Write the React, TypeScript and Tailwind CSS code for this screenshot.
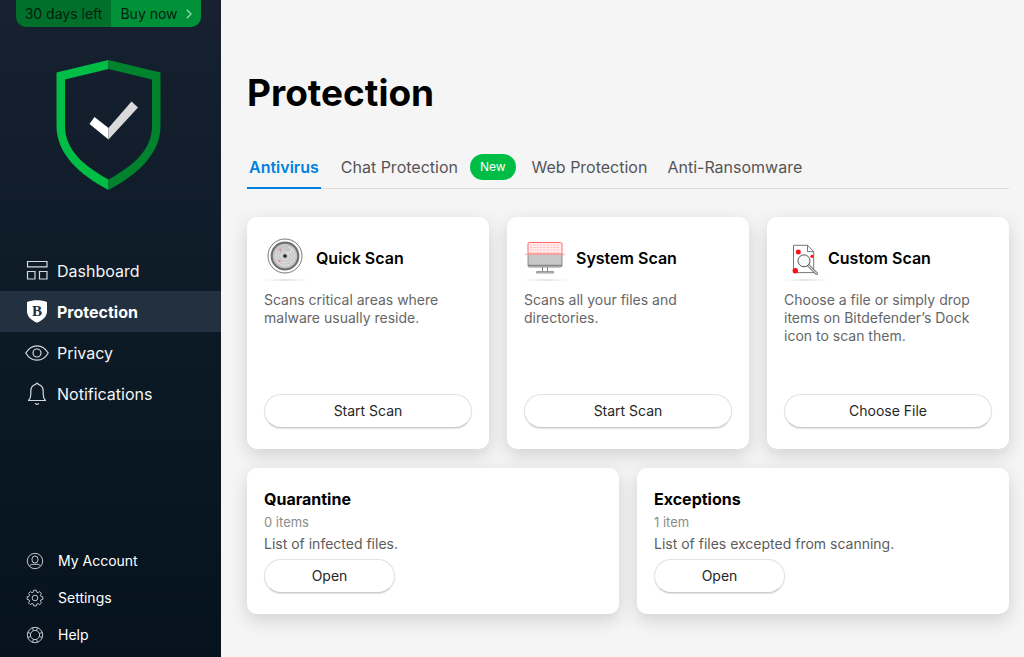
import { ReactNode } from "react";
import clsx from "clsx";

interface NavItem {
  label: string;
  icon: ReactNode;
  active?: boolean;
}

interface ScanCardProps {
  title: string;
  description: string;
  action: string;
  icon: ReactNode;
}

interface ListCardProps {
  title: string;
  count: string;
  description: string;
}

const StatusShield = () => (
  <svg width="106" height="130" viewBox="0 0 106 130" role="img" aria-label="Protected">
    <path d="M52.500 0 L0.500 12.500 V66 C0.500 94 24 115 52.500 130 V119.500 C28 106 9 90 9 66 V19.500 L52.500 9 Z" fill="#00bd45" />
    <path d="M52.500 0 L104.500 12.500 V66 C104.500 94 81 115 52.500 130 V119.500 C77 106 96 90 96 66 V19.500 L52.500 9 Z" fill="#00832c" />
    <path d="M38.500 57 L52.500 68 V79.500 L33.500 64 Z" fill="#fff" />
    <path d="M52.500 68 L75.500 41.500 L82 47.500 L52.500 79.500 Z" fill="#dadada" />
  </svg>
);

const DashboardIcon = () => (
  <svg width="24" height="24" viewBox="0 0 24 24" fill="none" stroke="#d5d9dd" strokeWidth="1.2">
    <path d="M2.500 2.500h19.500v5.300H2.500zM2.500 12.500h7.500v7.500H2.500zM14.500 12.500h7.500v7.500h-7.500z" />
  </svg>
);

const ShieldIcon = () => (
  <svg width="24" height="24" viewBox="0 0 24 24">
    <path d="M12 .3c3.500 0 7 .6 10 1.800v9.200c0 5-4 9-10 11.400C6 20.300 2 16.300 2 11.300V2.100C5 .9 8.500.3 12 .3z" fill="#fff" />
    <text x="12" y="16" textAnchor="middle" fontFamily="Liberation Serif, serif" fontSize="15" fontWeight="bold" fill="#22303f">B</text>
  </svg>
);

const EyeIcon = () => (
  <svg width="24" height="24" viewBox="0 0 24 24" fill="none" stroke="#d5d9dd" strokeWidth="1.2">
    <path d="M.8 12C3.500 7.300 7.300 4.800 12 4.800S20.500 7.300 23.200 12C20.500 16.700 16.700 19.200 12 19.200S3.500 16.700.8 12z" />
    <circle cx="12" cy="12" r="4" />
  </svg>
);

const BellIcon = () => (
  <svg width="24" height="24" viewBox="0 0 24 24" fill="none" stroke="#d5d9dd" strokeWidth="1.2" strokeLinejoin="round">
    <path d="M3.500 18.500c1.700-1.600 2.300-3.600 2.300-6.500V9.500c0-3.700 2-6.600 5-7.200C10.800.8 13.200.8 13.200 2.300c3 .6 5 3.500 5 7.200V12c0 2.900.6 4.900 2.300 6.500z" />
    <path d="M10.200 21.300c.7 1.500 2.900 1.500 3.600 0" />
  </svg>
);

const AccountIcon = () => (
  <svg width="18" height="18" viewBox="0 0 18 18" fill="none" stroke="#bfc5ca" strokeWidth="1">
    <circle cx="9" cy="9" r="7.700" />
    <rect x="6" y="4" width="6" height="7" rx="3" />
    <path d="M3.500 14.300c.6-1.500 1.800-2 3.500-2h4c1.700 0 2.900.5 3.500 2" />
  </svg>
);

const SettingsIcon = () => (
  <svg width="18" height="18" viewBox="0 0 18 18" fill="none" stroke="#bfc5ca" strokeWidth="1" strokeLinejoin="round">
    <path d="M7.700 1.200h2.600l.5 2 1.100.5 1.800-1.100 1.800 1.800-1.100 1.800.5 1.100 1.900.5v2.600l-1.900.5-.5 1.100 1.100 1.800-1.800 1.800-1.800-1.100-1.100.5-.5 1.900H7.700l-.5-1.900-1.100-.5-1.800 1.100-1.800-1.800 1.100-1.800-.5-1.100-1.900-.5V7.800l1.900-.5.5-1.100-1.100-1.800 1.800-1.800 1.800 1.100 1.100-.5z" />
    <circle cx="9" cy="9" r="2.800" />
  </svg>
);

const HelpIcon = () => (
  <svg width="18" height="18" viewBox="0 0 18 18" fill="none" stroke="#bfc5ca" strokeWidth="1">
    <circle cx="9" cy="9" r="7.700" />
    <circle cx="9" cy="9" r="4.600" />
    <path d="M6.500 1.700l1 3M11.500 1.700l-1 3M6.500 16.300l1-3M11.500 16.300l-1-3M1.700 6.500l3 1M1.700 11.500l3-1M16.300 6.500l-3 1M16.300 11.500l-3-1" />
  </svg>
);

const RadarIcon = () => (
  <svg width="42" height="42" viewBox="0 0 42 42" fill="none">
    <circle cx="21" cy="19" r="17" fill="#fff" stroke="#777" strokeWidth="1" />
    <circle cx="21" cy="19" r="13.300" fill="#c6c6c6" stroke="#707070" strokeWidth="2.200" />
    <circle cx="21" cy="19" r="9.500" stroke="#eee" strokeWidth=".8" strokeDasharray="36 12" />
    <circle cx="21" cy="19" r="6.800" stroke="#eee" strokeWidth=".8" strokeDasharray="30 8" />
    <circle cx="21" cy="19" r="4.200" stroke="#eee" strokeWidth=".8" />
    <path d="M21 19L29 12" stroke="#eee" strokeWidth="1" />
    <circle cx="16.500" cy="13" r="1.200" fill="#f58a8a" />
    <circle cx="15.500" cy="24" r="1.200" fill="#f58a8a" />
    <circle cx="21" cy="19" r="1.800" fill="#222" />
  </svg>
);

const MonitorIcon = () => (
  <svg width="42" height="42" viewBox="0 0 42 42" fill="none">
    <path d="M4 17h34v11.500a1.500 1.500 0 0 1-1.500 1.500h-31A1.500 1.500 0 0 1 4 28.500z" fill="#c8c8c8" stroke="#777" strokeWidth=".8" />
    <path d="M4 28.300h34" stroke="#777" strokeWidth="1" />
    <path d="M18.500 30v4.500M23.500 30v4.500M12.500 34.700h17v1.200h-17z" stroke="#777" strokeWidth=".9" />
    <path d="M4 17V7a1.500 1.500 0 0 1 1.500-1.500h31A1.500 1.500 0 0 1 38 7v10z" fill="#ffeeee" stroke="#f66" strokeWidth="1" />
    <path d="M6 8h30M6 10.500h30M6 13h30M6 15.500h30" stroke="#ffb0b0" strokeWidth=".7" strokeDasharray="2.500 .8" />
    <path d="M1 17.300h40" stroke="#f9a0a0" strokeWidth="1" />
  </svg>
);

const FileSearchIcon = () => (
  <svg width="34" height="42" viewBox="0 0 34 42" fill="none">
    <path d="M9.500 8.300h14l6.200 6.300v21H9.500z" fill="#fff" stroke="#555" strokeWidth=".8" />
    <path d="M23.500 8.300v6.300h6.200" stroke="#555" strokeWidth=".8" />
    <circle cx="14.300" cy="15" r="2.500" fill="#fa0f18" />
    <circle cx="28" cy="19.300" r="1.600" fill="#fa0f18" />
    <circle cx="11.300" cy="33.700" r="2.700" fill="#fa0f18" />
    <path d="M24 28l8.500 8.500" stroke="#555" strokeWidth="2.800" strokeLinecap="round" />
    <path d="M24 28l8.500 8.500" stroke="#ddd" strokeWidth="1.400" strokeLinecap="round" />
    <circle cx="20" cy="23.800" r="6" fill="#f8f8f8" stroke="#555" strokeWidth="1" />
  </svg>
);

const mainNav: NavItem[] = [
  { label: "Dashboard", icon: <DashboardIcon /> },
  { label: "Protection", icon: <ShieldIcon />, active: true },
  { label: "Privacy", icon: <EyeIcon /> },
  { label: "Notifications", icon: <BellIcon /> },
];

const footerNav: NavItem[] = [
  { label: "My Account", icon: <AccountIcon /> },
  { label: "Settings", icon: <SettingsIcon /> },
  { label: "Help", icon: <HelpIcon /> },
];

const scans: ScanCardProps[] = [
  {
    title: "Quick Scan",
    description: "Scans critical areas where malware usually reside.",
    action: "Start Scan",
    icon: <RadarIcon />,
  },
  {
    title: "System Scan",
    description: "Scans all your files and directories.",
    action: "Start Scan",
    icon: <MonitorIcon />,
  },
  {
    title: "Custom Scan",
    description: "Choose a file or simply drop items on Bitdefender’s Dock icon to scan them.",
    action: "Choose File",
    icon: <FileSearchIcon />,
  },
];

const lists: ListCardProps[] = [
  { title: "Quarantine", count: "0 items", description: "List of infected files." },
  { title: "Exceptions", count: "1 item", description: "List of files excepted from scanning." },
];

const PillButton = ({ children, className }: { children: ReactNode; className?: string }) => (
  <button
    className={clsx(
      "h-[34px] rounded-full border border-[#e2e2e2] border-b-[#cccccc] bg-white text-sm text-[#262626] shadow-[0_1px_1px_rgba(0,0,0,0.12)]",
      className
    )}
  >
    {children}
  </button>
);

const cardStyle = "flex flex-col rounded-[10px] bg-white px-[17px] shadow-[0_6px_18px_rgba(0,0,0,0.15)]";

const ScanCard = ({ title, description, action, icon }: ScanCardProps) => (
  <section className={clsx(cardStyle, "min-h-[232px] pt-5 pb-[21px]")}>
    <div className="flex items-center gap-2.5">
      {icon}
      <h2 className="text-base font-semibold text-black">{title}</h2>
    </div>
    <div className="h-0.5 w-11 bg-linear-to-r from-transparent via-[#e4e4e4] to-transparent" />
    <p className="mt-2.5 mb-4 text-sm leading-[18px] text-[#666666]">{description}</p>
    <PillButton className="mt-auto w-full">{action}</PillButton>
  </section>
);

const ListCard = ({ title, count, description }: ListCardProps) => (
  <section className={clsx(cardStyle, "items-start pt-5 pb-[21px]")}>
    <h2 className="text-base leading-[22px] font-bold text-black">{title}</h2>
    <p className="text-[13px] leading-6 text-[#8c8c8c]">{count}</p>
    <p className="mb-[5px] text-sm leading-5 text-[#5c5c5c]">{description}</p>
    <PillButton className="w-[131px]">Open</PillButton>
  </section>
);

const Sidebar = () => (
  <aside className="flex w-[221px] shrink-0 flex-col bg-linear-to-b from-[#172130] via-[#0c1a26] to-[#06131e] pb-1 text-white">
    <div className="ml-4 flex h-[27px] w-[185px] overflow-hidden rounded-b-[10px] text-sm text-[#03200f]">
      <span className="flex w-[95px] items-center justify-center bg-[#00702a]">30 days left</span>
      <button className="flex flex-1 items-center justify-center gap-2 bg-[#009139]">
        Buy now
        <svg width="6" height="10" viewBox="0 0 6 10" fill="none" stroke="#8fe0aa" strokeWidth="1.300">
          <path d="M.8.8L5 5 .8 9.200" />
        </svg>
      </button>
    </div>
    <div className="mt-[33px] mb-[60px] ml-14">
      <StatusShield />
    </div>
    <nav>
      {mainNav.map(({ label, icon, active }) => (
        <a
          key={label}
          href="#"
          className={clsx(
            "flex h-[41px] items-center gap-2 pl-[25px] text-base",
            active ? "bg-[#22303f] font-bold" : "text-[#f4f5f6]"
          )}
        >
          {icon}
          {label}
        </a>
      ))}
    </nav>
    <nav className="mt-auto">
      {footerNav.map(({ label, icon }) => (
        <a key={label} href="#" className="flex h-[37px] items-center gap-3.5 pl-[26px] text-sm">
          {icon}
          {label}
        </a>
      ))}
    </nav>
  </aside>
);

const App = () => {
  return (
    <div className="flex min-h-screen bg-[#f5f5f5] font-['Inter',sans-serif]">
      <Sidebar />
      <main className="flex-1 pt-[68px] pr-[15px] pb-8 pl-[26px]">
        <h1 className="text-[37px] leading-[50px] font-bold text-black">Protection</h1>
        <div className="mt-7 flex h-[43px] border-b border-[#dedede] text-base text-[#555555]" role="tablist">
          <button role="tab" aria-selected="true" className="-mb-px border-b-2 border-[#0080df] px-0.5 font-semibold text-[#0080df]">
            Antivirus
          </button>
          <button role="tab" className="ml-5 flex items-center gap-3">
            Chat Protection
            <span className="rounded-full bg-[#00bd45] px-2.5 text-xs leading-[26px] text-white">New</span>
          </button>
          <button role="tab" className="ml-4">Web Protection</button>
          <button role="tab" className="ml-5">Anti-Ransomware</button>
        </div>
        <div className="mt-7 grid grid-cols-3 gap-[18px]">
          {scans.map((scan) => (
            <ScanCard key={scan.title} {...scan} />
          ))}
        </div>
        <div className="mt-[19px] grid grid-cols-2 gap-[18px]">
          {lists.map((list) => (
            <ListCard key={list.title} {...list} />
          ))}
        </div>
      </main>
    </div>
  );
};

export default App;
